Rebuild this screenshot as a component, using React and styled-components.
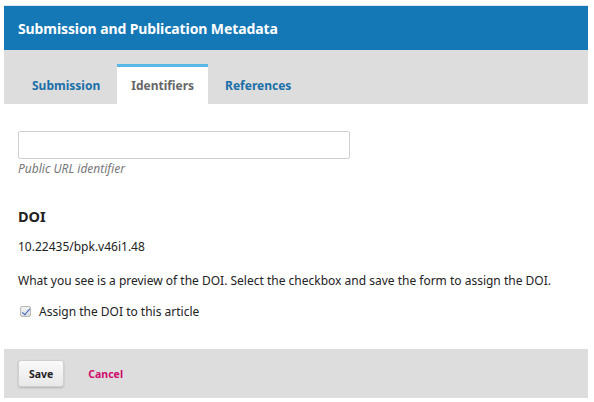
import React, { useState } from 'react';
import styled, { createGlobalStyle } from 'styled-components';

function App() {
    const [urlPath, setUrlPath] = useState("");
    const [assign, setAssign] = useState(true);

    return (
        <>
            <GlobalStyle />
            <Panel>
                <Header>Submission and Publication Metadata</Header>
                <TabBar>
                    <Tab>Submission</Tab>
                    <Tab active>Identifiers</Tab>
                    <Tab>References</Tab>
                </TabBar>
                <Body>
                    <Field>
                        <TextInput type='text' value={urlPath} onChange={(e) => setUrlPath(e.target.value)} />
                        <Hint>Public URL identifier</Hint>
                    </Field>
                    <SectionTitle>DOI</SectionTitle>
                    <Text>10.22435/bpk.v46i1.48</Text>
                    <Text>What you see is a preview of the DOI. Select the checkbox and save the form to assign the DOI.</Text>
                    <CheckRow>
                        <CheckBox type='checkbox' checked={assign} onChange={() => setAssign(!assign)} />
                        Assign the DOI to this article
                    </CheckRow>
                </Body>
                <Footer>
                    <SaveButton>Save</SaveButton>
                    <CancelLink href='#'>Cancel</CancelLink>
                </Footer>
            </Panel>
        </>
    )
}

const GlobalStyle = createGlobalStyle`
    body {
        margin: 0;
        background: #fff;
        font-family: 'Noto Sans', 'Open Sans', sans-serif;
    }
`

const Panel = styled.div`
    margin: 5px 6px 0 4px;
    border-top: 1px solid #dbe8f2;
`

const Header = styled.div`
    background: #1478b6;
    color: #fff;
    font-weight: 700;
    font-size: 14px;
    letter-spacing: -0.1px;
    height: 44px;
    padding: 0 14px;
    display: flex;
    align-items: center;
`

const TabBar = styled.div`
    background: #dddddd;
    height: 54px;
    display: flex;
    align-items: flex-end;
    gap: 3px;
    padding-left: 14px;
`

const Tab = styled.div`
    height: 37px;
    padding: 0 14px;
    display: flex;
    align-items: center;
    font-size: 12px;
    font-weight: 700;
    color: ${p => p.active ? '#666' : '#1a6fa8'};
    background: ${p => p.active ? '#fff' : 'transparent'};
    border-top: 3px solid ${p => p.active ? '#5ab7ea' : 'transparent'};
`

const Body = styled.div`
    padding: 27px 14px 29px;
`

const Field = styled.div`
    margin-bottom: 29px;
`

const TextInput = styled.input`
    display: block;
    box-sizing: border-box;
    width: 332px;
    height: 28px;
    border: 1px solid #cfcfcf;
    border-radius: 2px;
    outline: none;
`

const Hint = styled.div`
    font-size: 12px;
    font-style: italic;
    color: #777;
    margin-top: 1px;
`

const SectionTitle = styled.h3`
    margin: 0 0 12px;
    font-size: 14.5px;
    font-weight: 700;
    color: #222;
`

const Text = styled.p`
    margin: 0 0 17px;
    font-size: 12px;
    color: #222;
`

const CheckRow = styled.label`
    display: flex;
    align-items: center;
    gap: 8px;
    margin-top: -3px;
    font-size: 12px;
    color: #222;
`

const CheckBox = styled.input`
    appearance: none;
    margin: 0 0 0 2px;
    width: 11px;
    height: 11px;
    border: 1px solid #b8b8b8;
    border-radius: 2px;
    background: linear-gradient(#f4f4f4, #dcdcdc);
    position: relative;

    &:checked::after {
        content: '';
        position: absolute;
        left: 3px;
        top: 0px;
        width: 3px;
        height: 7px;
        border: solid #3b5fc4;
        border-width: 0 1.5px 1.5px 0;
        transform: rotate(40deg);
    }
`

const Footer = styled.div`
    background: #dddddd;
    height: 49px;
    display: flex;
    align-items: center;
    gap: 24px;
    padding-left: 14px;
`

const SaveButton = styled.button`
    height: 27px;
    padding: 0 10px;
    border: 1px solid #d0d0d0;
    border-radius: 3px;
    background: linear-gradient(#fafafa, #e8e8e8);
    box-shadow: 0 1px 2px rgba(0,0,0,0.2);
    font-family: inherit;
    font-size: 10.5px;
    font-weight: 700;
    color: #222;
`

const CancelLink = styled.a`
    font-size: 10.5px;
    font-weight: 700;
    color: #d00a6c;
    text-decoration: none;
`

export default App;
